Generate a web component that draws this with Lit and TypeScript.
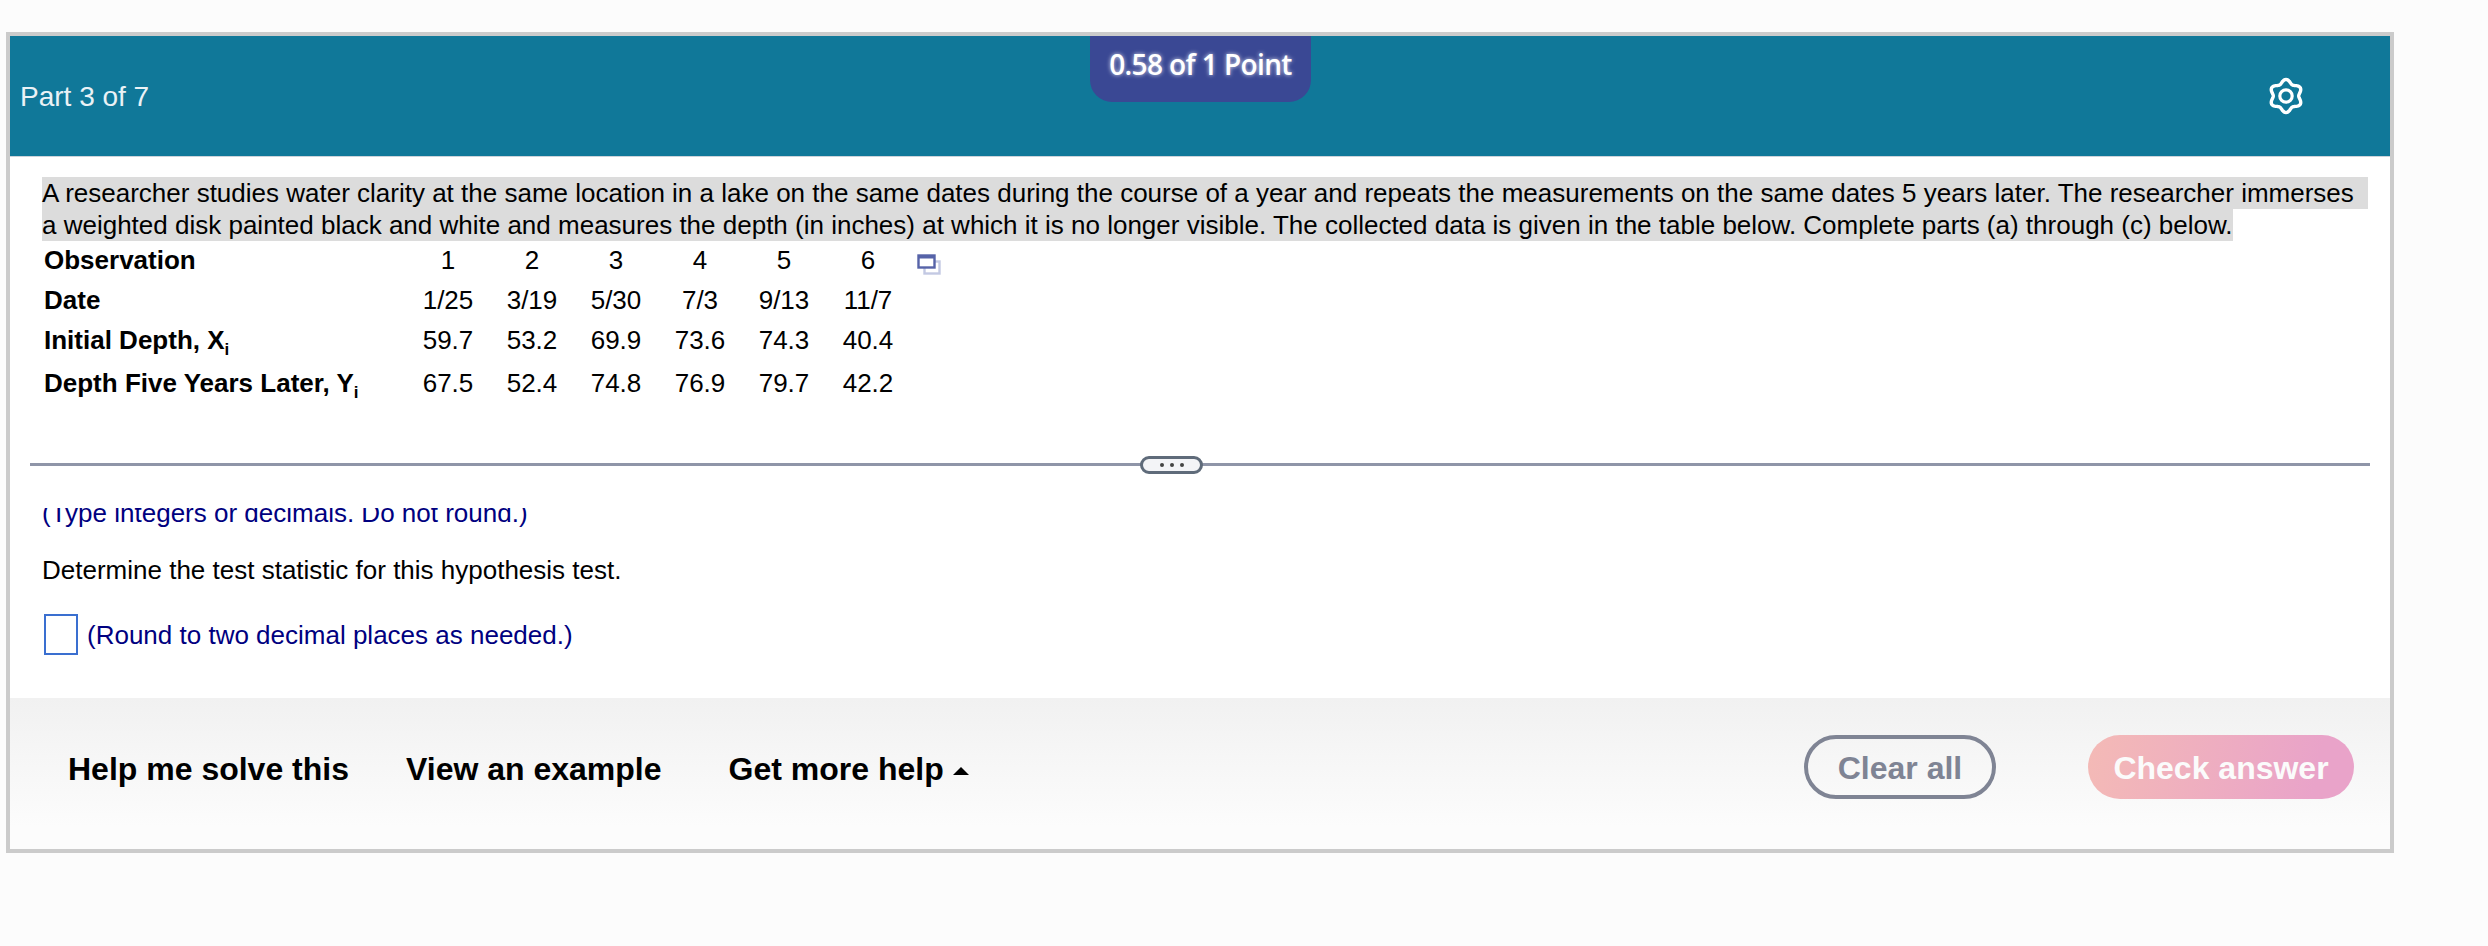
import { LitElement, html, css, svg } from "lit";
import { customElement } from "lit/decorators.js";

const rows: { label: string; sub?: string; cells: string[] }[] = [
  { label: "Observation", cells: ["1", "2", "3", "4", "5", "6"] },
  { label: "Date", cells: ["1/25", "3/19", "5/30", "7/3", "9/13", "11/7"] },
  { label: "Initial Depth, X", sub: "i", cells: ["59.7", "53.2", "69.9", "73.6", "74.3", "40.4"] },
  { label: "Depth Five Years Later, Y", sub: "i", cells: ["67.5", "52.4", "74.8", "76.9", "79.7", "42.2"] },
];

function gearPath(): string {
  const pts: string[] = [];
  for (let i = 0; i < 120; i++) {
    const t = (i / 120) * Math.PI * 2;
    const r = 14.6 + 1.9 * Math.cos(6 * t);
    const x = 19 + r * Math.sin(t);
    const y = 19 - r * Math.cos(t);
    pts.push(`${i === 0 ? "M" : "L"}${x.toFixed(2)} ${y.toFixed(2)}`);
  }
  return pts.join("") + "Z";
}

@customElement("app-root")
export class AppRoot extends LitElement {
  static styles = css`
    :host { display: block; width: 2488px; height: 946px; background: #fcfcfc; font-family: "Liberation Sans", Arial, sans-serif; color: #000; overflow: hidden; }
    .page { padding: 32px 0 0 6px; }
    .card { width: 2388px; height: 821px; box-sizing: border-box; border: 4px solid #cbcbcb; background: #fff; display: flex; flex-direction: column; position: relative; }
    .head { height: 121px; box-sizing: border-box; flex: none; border-bottom: 1px solid #ccd3da; background: #107899; display: flex; align-items: center; justify-content: space-between; padding: 0 85px 0 10px; color: #eaf2f6; font-size: 28px; }
    .head span { padding-top: 1px; }
    .badge { position: absolute; left: 1080px; top: 0; width: 221px; height: 66px; background: #3a4894; border-radius: 0 0 22px 22px; color: #fff; font-family: "Open Sans", sans-serif; font-size: 28px; font-weight: 600; line-height: 38px; display: flex; justify-content: center; padding-top: 9px; box-sizing: border-box; text-shadow: 0 0 4px rgba(255,255,255,.8); letter-spacing: -0.6px; }
    .gear { width: 38px; height: 38px; display: block; }
    .question { flex: none; height: 306px; box-sizing: border-box; padding: 20px 0 0 32px; font-size: 26px; line-height: 32px; }
    .hl { background: #dcdcdc; width: fit-content; white-space: nowrap; height: 32px; }
    .grid { display: grid; grid-template-columns: 362px repeat(6, 84px) 50px; grid-template-rows: 40px 40px 40px 46px; align-items: center; line-height: 30px; margin: -1px 0 0 2px; }
    .label { font-weight: 700; }
    .label sub { font-size: 17px; line-height: 0; vertical-align: -6px; }
    .cell { text-align: center; }
    .icon { width: 24px; height: 22px; margin: 9px 0 0 7px; display: block; }
    .divider { flex: none; height: 3px; margin: 0 20px; background: #8f95a8; position: relative; }
    .pill { position: absolute; left: 1110px; top: -7px; width: 63px; height: 18px; box-sizing: border-box; border: 3px solid #5f6b7a; border-radius: 9px; background: #f3f4f7; display: flex; align-items: center; justify-content: center; gap: 6px; }
    .dot { width: 4px; height: 4px; border-radius: 50%; background: #444; }
    .scroll { flex: 1; overflow: hidden; min-height: 0; padding: 0 32px; font-size: 26px; line-height: 32px; }
    .clip-wrap { height: 22px; margin-top: 42px; overflow: hidden; }
    .clipped { margin: -11px 0 0 0; color: #000080; }
    .q2 { margin-top: 24px; }
    .answer { display: flex; align-items: center; gap: 9px; margin: 28px 0 0 2px; color: #000080; }
    .box { width: 34px; height: 41px; box-sizing: border-box; border: 2px solid #3a6fd0; background: #fff; }
    .foot { flex: none; height: 151px; background: linear-gradient(#f1f1f1, #fcfcfc 85%); display: flex; align-items: flex-start; box-sizing: border-box; padding: 37px 36px 0 58px; }
    .link { font-weight: 700; font-size: 32px; line-height: 64px; margin: 2px 57px 0 0; }
    .link.more { margin: 2px 0 0 10px; display: flex; align-items: center; gap: 9px; }
    .tri { width: 0; height: 0; border-left: 8px solid transparent; border-right: 8px solid transparent; border-bottom: 8px solid #000; margin-top: 4px; }
    .spacer { flex: 1; }
    .btn { height: 64px; box-sizing: border-box; border-radius: 32px; font: 700 32px/1 "Liberation Sans", Arial, sans-serif; display: flex; align-items: center; justify-content: center; padding: 2px 0 0; }
    .clear { width: 192px; border: 4px solid #7f8494; background: transparent; color: #7f8494; margin-right: 92px; }
    .check { width: 266px; border: 0; color: #fbfbfb; background: linear-gradient(100deg, #f4bab6, #e9a3c9 85%); }
  `;

  private gear() {
    return html`<svg class="gear" viewBox="0 0 38 38" fill="none" stroke="#fff" stroke-width="3.4" stroke-linejoin="round">
      ${svg`<path d=${gearPath()}/><circle cx="19" cy="19" r="6.2" stroke-width="3.200"/>`}
    </svg>`;
  }

  private windowIcon() {
    return html`<svg class="icon" viewBox="0 0 24 22" fill="none">
      ${svg`<rect x="7.500" y="7.500" width="15" height="12" stroke="#c3c9e3" stroke-width="2.400"/><rect x="1.500" y="1.500" width="16" height="12" fill="#fff" stroke="#5663a8" stroke-width="2.400"/><rect x="1" y="1" width="17" height="3.500" fill="#5663a8"/>`}
    </svg>`;
  }

  render() {
    return html`<div class="page"><div class="card">
      <div class="head"><span>Part 3 of 7</span>${this.gear()}</div>
      <div class="badge">0.58 of 1 Point</div>
      <div class="question">
        <div class="hl">A researcher studies water clarity at the same location in a lake on the same dates during the course of a year and repeats the measurements on the same dates 5 years later. The researcher immerses&nbsp;&nbsp;</div>
        <div class="hl">a weighted disk painted black and white and measures the depth (in inches) at which it is no longer visible. The collected data is given in the table below. Complete parts (a) through (c) below.</div>
        <div class="grid">
          ${rows.map((r, i) => html`
            <div class="label">${r.label}${r.sub ? html`<sub>${r.sub}</sub>` : ""}</div>
            ${r.cells.map((c) => html`<div class="cell">${c}</div>`)}
            ${i === 0 ? this.windowIcon() : html`<div></div>`}
          `)}
        </div>
      </div>
      <div class="divider"><div class="pill"><i class="dot"></i><i class="dot"></i><i class="dot"></i></div></div>
      <div class="scroll">
        <div class="clip-wrap"><p class="clipped">(Type integers or decimals. Do not round.)</p></div>
        <div class="q2">Determine the test statistic for this hypothesis test.</div>
        <div class="answer"><div class="box"></div><span>(Round to two decimal places as needed.)</span></div>
      </div>
      <div class="foot">
        <div class="link">Help me solve this</div>
        <div class="link">View an example</div>
        <div class="link more">Get more help<i class="tri"></i></div>
        <div class="spacer"></div>
        <button class="btn clear">Clear all</button>
        <button class="btn check">Check answer</button>
      </div>
    </div></div>`;
  }
}
